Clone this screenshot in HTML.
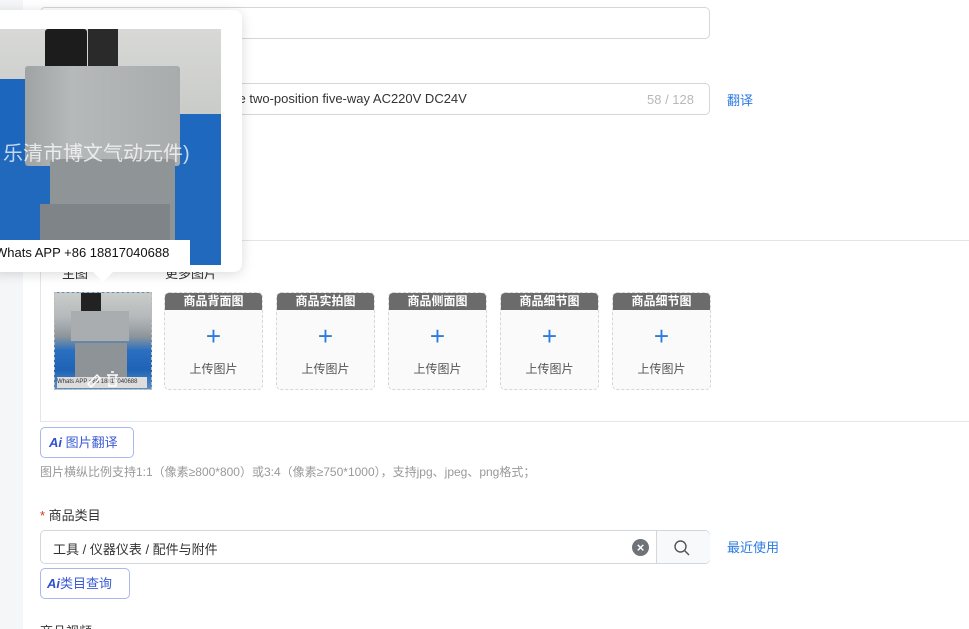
<!DOCTYPE html>
<html><head><meta charset="utf-8"><style>
*{box-sizing:border-box;margin:0;padding:0}
html,body{width:969px;height:629px;overflow:hidden}
body{background:#fff;font-family:"Liberation Sans","Noto Sans CJK SC",sans-serif;position:relative;color:#333}
.abs{position:absolute}
.side{left:0;top:0;width:23px;height:629px;background:#f5f6f8}
.inp{border:1px solid #d3d6db;border-radius:5px;background:#fff}
.slot{width:99px;height:98px;border:1px dashed #d4d6da;border-radius:5px;background:#fafafa;overflow:hidden;top:292px}
.slot .h{height:17px;background:#6b6b6b;color:#fff;font-size:12px;font-weight:bold;text-align:center;line-height:17px}
.slot .p{color:#2b7be0;font-size:26px;text-align:center;line-height:26px;margin-top:13px;font-weight:300}
.slot .t{color:#555;font-size:12px;text-align:center;margin-top:11px}
.ai{border:1px solid #a9b8f0;border-radius:5px;color:#3a5bd6;font-size:13px;height:31px;line-height:29px;padding:0 8px}
.ai b{font-style:italic;font-weight:900;color:#3050d0}
</style></head><body>
<div class="abs side"></div>
<div class="abs inp" style="left:40px;top:7px;width:670px;height:32px"></div>
<div class="abs inp" style="left:40px;top:83px;width:670px;height:32px"></div>
<div class="abs" style="left:232px;top:91px;font-size:13px;color:#333">ve two-position five-way AC220V DC24V</div>
<div class="abs" style="left:647px;top:92px;font-size:13px;color:#b8b8b8">58 / 128</div>
<div class="abs" style="left:727px;top:90px;font-size:13px;color:#2b7be0">翻译</div>

<div class="abs" style="left:40px;top:240px;width:940px;height:182px;border:1px solid #e3e5e8;border-right:none"></div>
<div class="abs" style="left:62px;top:263px;font-size:13px">主图</div>
<div class="abs" style="left:165px;top:263px;font-size:13px">更多图片</div>

<div class="abs" style="left:54px;top:292px;width:98px;height:98px;border:1px dashed #bbb;overflow:hidden;background:linear-gradient(180deg,#c9ccc9 0%,#b5b9bb 25%,#8f969b 45%,#2a6fc0 60%,#1e63b5 80%,#5a8fc6 100%)">
 <div class="abs" style="left:26px;top:0;width:20px;height:20px;background:#222"></div>
 <div class="abs" style="left:16px;top:18px;width:58px;height:30px;background:#a9adaf"></div>
 <div class="abs" style="left:20px;top:50px;width:52px;height:36px;background:#8d9396"></div>
 <div class="abs" style="left:2px;top:84px;width:90px;height:11px;background:#ddd;font-size:6px;color:#333;line-height:11px;white-space:nowrap">Whats APP +86 18817040688</div>
 <svg class="abs" style="left:30px;top:76px" width="36" height="20"><path d="M3 15 L12 6 L15 9 L6 18 Z" fill="none" stroke="#fff" stroke-width="1.4"/><path d="M22 6h11M24 6v11h7V6M26 3h3" fill="none" stroke="#fff" stroke-width="1.4"/></svg>
</div>
<div class="abs slot" style="left:164px"><div class="h">商品背面图</div><div class="p">+</div><div class="t">上传图片</div></div>
<div class="abs slot" style="left:276px"><div class="h">商品实拍图</div><div class="p">+</div><div class="t">上传图片</div></div>
<div class="abs slot" style="left:388px"><div class="h">商品侧面图</div><div class="p">+</div><div class="t">上传图片</div></div>
<div class="abs slot" style="left:500px"><div class="h">商品细节图</div><div class="p">+</div><div class="t">上传图片</div></div>
<div class="abs slot" style="left:612px"><div class="h">商品细节图</div><div class="p">+</div><div class="t">上传图片</div></div>

<div class="abs ai" style="left:40px;top:427px;width:94px"><b>Ai</b> 图片翻译</div>
<div class="abs" style="left:40px;top:463px;font-size:12px;color:#999">图片横纵比例支持1:1（像素≥800*800）或3:4（像素≥750*1000），支持jpg、jpeg、png格式；</div>

<div class="abs" style="left:40px;top:505px;font-size:13px"><span style="color:#d4380d">*</span> 商品类目</div>
<div class="abs inp" style="left:40px;top:530px;width:670px;height:34px">
 <div class="abs" style="left:12px;top:8px;font-size:13px;color:#333">工具 / 仪器仪表 / 配件与附件</div>
 <div class="abs" style="left:591px;top:8px;width:17px;height:17px;border-radius:50%;background:#6e7379;color:#fff;font-size:13px;line-height:17px;text-align:center;font-weight:bold">×</div>
 <div class="abs" style="left:615px;top:0;width:54px;height:32px;border-left:1px solid #d3d6db;background:#f8f9fb;border-radius:0 5px 5px 0">
  <svg class="abs" style="left:16px;top:8px" width="18" height="18"><circle cx="7.5" cy="7.5" r="5.5" fill="none" stroke="#555" stroke-width="1.4"/><path d="M11.5 11.5L16 16" stroke="#555" stroke-width="1.5"/></svg>
 </div>
</div>
<div class="abs" style="left:727px;top:537px;font-size:13px;color:#2b7be0">最近使用</div>
<div class="abs ai" style="left:40px;top:568px;width:90px;padding:0 6px"><b>Ai</b>类目查询</div>
<div class="abs" style="left:40px;top:621px;font-size:13px">商品视频</div>

<!-- popup -->
<div class="abs" style="left:-10px;top:10px;width:252px;height:262px;background:#fff;border-radius:8px;box-shadow:0 2px 12px rgba(0,0,0,.15)"></div>
<div class="abs" style="left:96px;top:265px;width:14px;height:14px;background:#fff;transform:rotate(45deg)"></div>
<div class="abs" style="left:0;top:29px;width:221px;height:236px;overflow:hidden;background:linear-gradient(180deg,#d8d9d6 0%,#c8cac7 40%,#7a8c9a 60%,#1f64b8 75%,#2a72c4 100%)">
 <div class="abs" style="left:0;top:50px;width:30px;height:80px;background:#1d66bd"></div>
 <div class="abs" style="left:180px;top:85px;width:41px;height:150px;background:#1f68bf"></div>
 <div class="abs" style="left:0;top:130px;width:221px;height:106px;background:#2169bd"></div>
 <div class="abs" style="left:45px;top:0;width:42px;height:45px;background:#1c1c1c;border-radius:3px"></div>
 <div class="abs" style="left:88px;top:0;width:30px;height:55px;background:#2a2a2a"></div>
 <div class="abs" style="left:25px;top:37px;width:155px;height:100px;background:linear-gradient(90deg,#9fa3a4,#b6b9ba 30%,#a9acad);border-radius:3px"></div>
 <div class="abs" style="left:50px;top:130px;width:125px;height:95px;background:#8f9597;border-radius:4px"></div>
 <div class="abs" style="left:40px;top:175px;width:130px;height:50px;background:#7e8487"></div>
 <div class="abs" style="left:3px;top:108px;font-size:20px;color:rgba(255,255,255,.75);white-space:nowrap">乐清市博文气动元件)</div>
 <div class="abs" style="left:-5px;top:211px;width:195px;height:25px;background:#fff;font-size:13px;color:#111;line-height:25px;white-space:nowrap">Whats APP +86 18817040688</div>
</div>
</body></html>
